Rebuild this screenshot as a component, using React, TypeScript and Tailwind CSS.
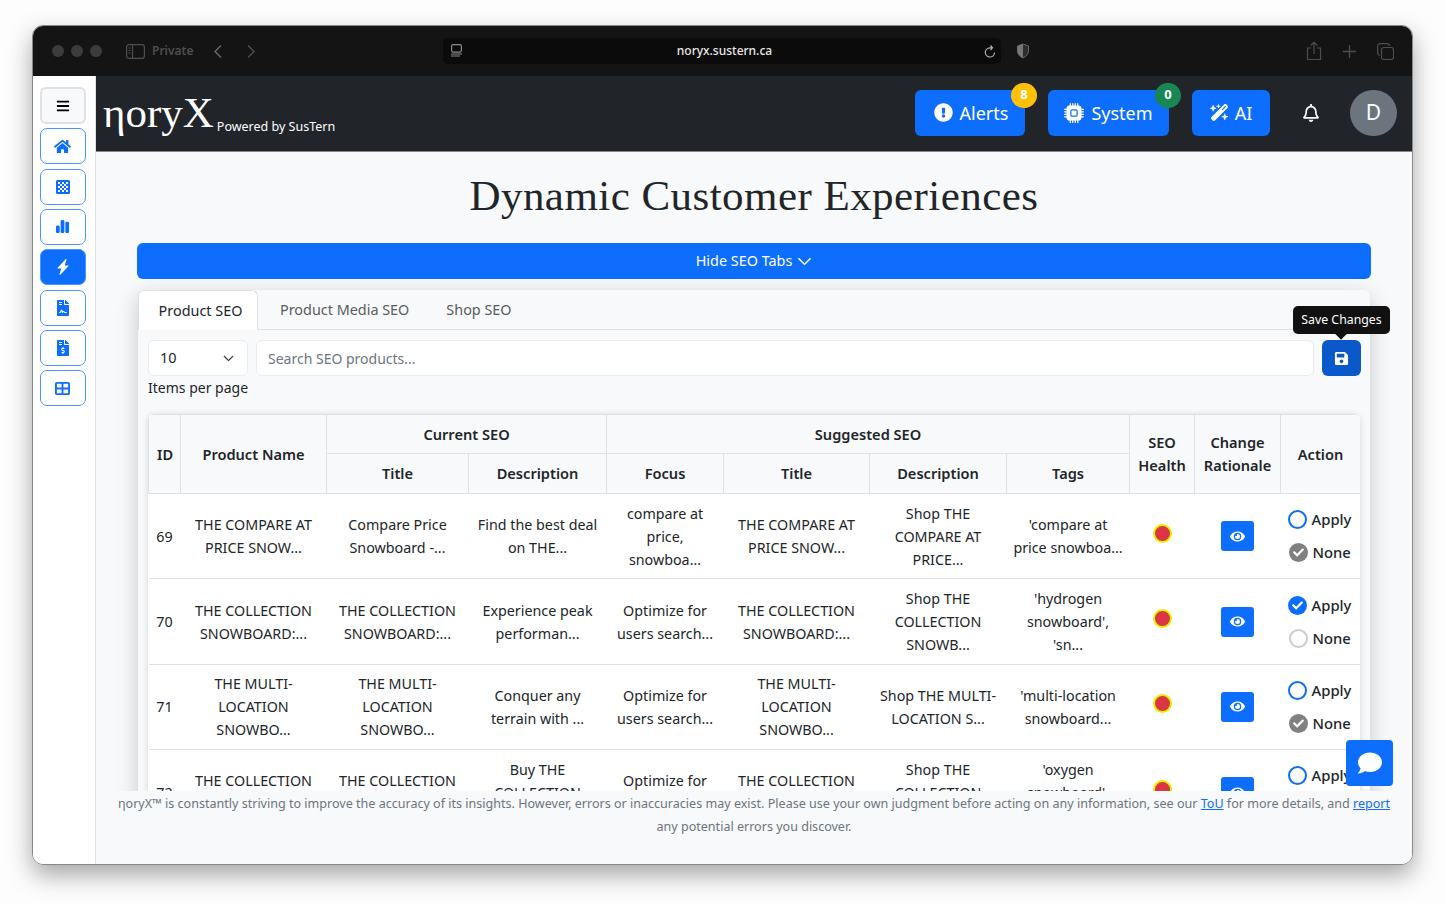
import { BsChevronDown, BsCpuFill, BsLightningChargeFill } from "react-icons/bs";
import {
  FaBars,
  FaCheck,
  FaComment,
  FaExclamationCircle,
  FaEye,
  FaFileContract,
  FaFileInvoiceDollar,
  FaHome,
  FaRegBell,
  FaSave,
} from "react-icons/fa";
import { FaChartSimple, FaTableCellsLarge, FaWandMagicSparkles } from "react-icons/fa6";

const sans = "font-['Noto_Sans',sans-serif]";

const rows = [
  { id: 69, name: "THE COMPARE AT PRICE SNOW...", title: "Compare Price Snowboard -...", desc: "Find the best deal on THE...", focus: "compare at price, snowboa...", sTitle: "THE COMPARE AT PRICE SNOW...", sDesc: "Shop THE COMPARE AT PRICE...", tags: "'compare at\nprice snowboa...", apply: false },
  { id: 70, name: "THE COLLECTION SNOWBOARD:...", title: "THE COLLECTION SNOWBOARD:...", desc: "Experience peak performan...", focus: "Optimize for users search...", sTitle: "THE COLLECTION SNOWBOARD:...", sDesc: "Shop THE COLLECTION SNOWB...", tags: "'hydrogen\nsnowboard',\n'sn...", apply: true },
  { id: 71, name: "THE MULTI-LOCATION SNOWBO...", title: "THE MULTI-LOCATION SNOWBO...", desc: "Conquer any terrain with ...", focus: "Optimize for users search...", sTitle: "THE MULTI-LOCATION SNOWBO...", sDesc: "Shop THE MULTI-LOCATION S...", tags: "'multi-location\nsnowboard...", apply: false },
  { id: 72, name: "THE COLLECTION SNOWBOARD:...", title: "THE COLLECTION SNOWBOARD:...", desc: "Buy THE COLLECTION SNOWBO...", focus: "Optimize for users search...", sTitle: "THE COLLECTION SNOWBOARD:...", sDesc: "Shop THE COLLECTION SNOWB...", tags: "'oxygen\nsnowboard',\n'sn...", apply: false },
];

function ChessIcon() {
  return (
    <svg width="14" height="14" viewBox="0 0 14 14" fill="currentColor">
      <rect width="14" height="14" rx="1.5" />
      {[2, 6, 10].flatMap((x) =>
        [2, 6, 10].map((y) => <rect key={`${x}-${y}`} x={x} y={y} width="2" height="2" fill="#fff" />)
      )}
      {[4, 8].flatMap((x) =>
        [4, 8].map((y) => <rect key={`b${x}-${y}`} x={x} y={y} width="2" height="2" fill="#fff" />)
      )}
    </svg>
  );
}

const sideIcons = [
  { name: "home", icon: <FaHome size={17} /> },
  { name: "grid", icon: <ChessIcon /> },
  { name: "chart", icon: <FaChartSimple size={15} /> },
  { name: "bolt", icon: <BsLightningChargeFill size={16} /> },
  { name: "sign", icon: <FaFileContract size={16} /> },
  { name: "bill", icon: <FaFileInvoiceDollar size={16} /> },
  { name: "table", icon: <FaTableCellsLarge size={15} /> },
];

function RadioDot({ state }: { state: "on" | "done" | "off" | "empty" }) {
  if (state === "on")
    return <span className="w-[19px] h-[19px] rounded-full bg-[#0d6efd] text-white flex items-center justify-center"><FaCheck size={11} /></span>;
  if (state === "done")
    return <span className="w-[19px] h-[19px] rounded-full bg-[#808080] text-white flex items-center justify-center"><FaCheck size={11} /></span>;
  if (state === "off") return <span className="w-[19px] h-[19px] rounded-full border-2 border-[#0d6efd] bg-white" />;
  return <span className="w-[19px] h-[19px] rounded-full border-2 border-[#ccc] bg-white" />;
}

const th = "border border-[#dee2e6] font-semibold text-[14.6px] text-center align-middle px-2 py-0";
const td = "border-b border-[#dee2e6] text-center align-middle px-2 py-0";

export default function App() {
  return (
    <div className={`${sans} w-[1445px] h-[904px] bg-[#fdfdfd] overflow-hidden pt-[25px] pl-[32px]`}>
      <div className="relative w-[1381px] h-[840px] rounded-[11px] overflow-hidden flex flex-col border border-[#888] shadow-[0_10px_24px_rgba(0,0,0,0.35)]">
        {/* safari toolbar */}
        <div className="h-[50px] shrink-0 bg-[#141414] flex items-center text-[#4e4e4e]">
          <div className="flex gap-[7px] pl-[19px]">
            <span className="w-[12px] h-[12px] rounded-full bg-[#3c3c3c]" />
            <span className="w-[12px] h-[12px] rounded-full bg-[#3c3c3c]" />
            <span className="w-[12px] h-[12px] rounded-full bg-[#3c3c3c]" />
          </div>
          <svg className="ml-[24px]" width="19" height="15" viewBox="0 0 19 15" fill="none" stroke="currentColor" strokeWidth="1.2">
            <rect x="0.6" y="0.6" width="17.8" height="13.8" rx="2.5" />
            <path d="M6.5 1v13M2.5 4h2M2.5 6.5h2M2.5 9h2" />
          </svg>
          <span className="ml-[7px] text-[12px] font-semibold">Private</span>
          <svg className="ml-[20px]" width="10" height="15" viewBox="0 0 10 15" fill="none" stroke="#6a6a6a" strokeWidth="1.4"><path d="M8 1.5 2 7.500l6 6" /></svg>
          <svg className="ml-[23px]" width="10" height="15" viewBox="0 0 10 15" fill="none" stroke="currentColor" strokeWidth="1.4"><path d="m2 1.500 6 6-6 6" /></svg>
          <div className="ml-[187px] w-[558px] h-[26px] rounded-[5px] bg-[#0b0b0b] flex items-center px-[7px] text-[#8a8a8a]">
            <svg width="13" height="14" viewBox="0 0 13 14" fill="none" stroke="currentColor" strokeWidth="1.2">
              <rect x="1.6" y="0.6" width="9.8" height="7.5" rx="1.5" /><path d="M1 10h11M1 12h9" />
            </svg>
            <span className="flex-1 text-center text-[12px] font-medium text-[#e8e8e8] pl-[2px]">noryx.sustern.ca</span>
            <svg className="mr-[-3px]" width="14" height="15" viewBox="0 0 14 15" fill="none" stroke="#b0b0b0" strokeWidth="1.2">
              <path d="M11.500 8.500a4.600 4.600 0 1 1-4.600-4.700h2M7.500 1.500l2 2.300-2 2.200" />
            </svg>
          </div>
          <svg className="ml-[15px]" width="14" height="16" viewBox="0 0 14 16"><path d="M7 1 1.500 3v5c0 3.500 3 5.800 5.500 7 2.500-1.200 5.500-3.500 5.500-7V3z" fill="#2d2d2d" stroke="#666" /><path d="M7 1 1.500 3v5c0 3.500 3 5.800 5.500 7z" fill="#777" /></svg>
          <div className="ml-auto flex items-center gap-[20px] pr-[18px]">
            <svg width="16" height="20" viewBox="0 0 16 20" fill="none" stroke="currentColor" strokeWidth="1.2"><path d="M5 7H1.500v11.500h13V7H11M8 13V1.500M4.800 4.500 8 1.300l3.200 3.200" /></svg>
            <svg width="15" height="15" viewBox="0 0 15 15" fill="none" stroke="currentColor" strokeWidth="1.300"><path d="M7.500 1v13M1 7.500h13" /></svg>
            <svg width="17" height="17" viewBox="0 0 17 17" fill="none" stroke="currentColor" strokeWidth="1.200"><rect x="4.500" y="4.500" width="12" height="12" rx="2.500" /><path d="M12.500 2.800C12.300 1.500 11.500.7 10 .7H3C1.600.7.700 1.600.700 3v7c0 1.500.8 2.300 2 2.500" /></svg>
          </div>
        </div>

        <div className="flex-1 flex min-h-0">
          {/* sidebar */}
          <div className="w-[63px] shrink-0 bg-white border-r border-[#dee2e6] flex flex-col items-center pt-[11px] pr-[3px] gap-[4.33px]">
            <div className="w-[46px] h-[37px] rounded-[6px] bg-[#f8f9fa] border-2 border-[#dee2e6] flex items-center justify-center text-black">
              <FaBars size={14} />
            </div>
            {sideIcons.map((s) => (
              <div
                key={s.name}
                className={`w-[46px] h-[36px] shrink-0 rounded-[7px] border border-[#4d94ff] flex items-center justify-center ${
                  s.name === "bolt" ? "bg-[#0d6efd] text-white" : "bg-white text-[#0d6efd]"
                }`}
              >
                {s.icon}
              </div>
            ))}
          </div>

          <div className="flex-1 min-w-0 flex flex-col bg-[#f8f9fa]">
            {/* header */}
            <div className="h-[76px] shrink-0 bg-[#212529] flex items-center text-white border-b border-[#888] pb-[2px]">
              <div className="pl-[7px] flex items-end">
                <span className="font-['Liberation_Serif',serif] text-[43px] leading-[44px]">ηoryX</span>
                <span className="ml-[3px] mb-[-1px] text-[12.5px] leading-[18px]">Powered by SusTern</span>
              </div>
              <div className="ml-auto flex items-center pr-[15px]">
                <div className="relative h-[46px] w-[110px] rounded-[6px] bg-[#0d6efd] flex items-center justify-center gap-[7px] text-[18px] pl-[2px]">
                  <FaExclamationCircle size={19} />
                  <span className="pt-[1px]">Alerts</span>
                  <span className="absolute -top-[7px] -right-[12px] w-[26px] h-[25px] rounded-full bg-[#ffc107] flex items-center justify-center text-[13px] font-bold">8</span>
                </div>
                <div className="relative ml-[23px] h-[46px] w-[121px] rounded-[6px] bg-[#0d6efd] flex items-center justify-center gap-[7px] text-[18px]">
                  <BsCpuFill size={20} />
                  <span className="pt-[1px]">System</span>
                  <span className="absolute -top-[7px] -right-[12px] w-[26px] h-[25px] rounded-full bg-[#198754] flex items-center justify-center text-[13px] font-bold">0</span>
                </div>
                <div className="ml-[23px] h-[46px] w-[78px] rounded-[6px] bg-[#0d6efd] flex items-center justify-center gap-[6px] text-[18px]">
                  <FaWandMagicSparkles size={19} />
                  <span className="pt-[1px]">AI</span>
                </div>
                <FaRegBell className="ml-[32px]" size={18} />
                <div className="ml-[30px] w-[47px] h-[46px] rounded-full bg-[#6c757d] flex items-center justify-center text-[21px]">D</div>
              </div>
            </div>

            {/* scrolling content */}
            <div className="relative h-[639px] shrink-0 overflow-hidden px-[41px]">
              <h1 className="font-['Liberation_Serif',serif] text-[43px] tracking-[0.45px] leading-[48px] text-center text-[#212529] pt-[20px] h-[91px]">
                Dynamic Customer Experiences
              </h1>
              <div className="h-[36px] rounded-[6px] bg-[#0d6efd] text-white text-[14.4px] flex items-center justify-center gap-[5px]">
                Hide SEO Tabs <BsChevronDown size={15} strokeWidth={0.7} />
              </div>
              <div className="mt-[11px] mx-[1px] rounded-[6px] bg-[#f8f9fa] shadow-[0_6px_22px_rgba(0,0,0,0.2)] h-[600px]">
                <div className="flex h-[40px] border-b border-[#dee2e6] text-[14.4px] text-[#595c5f]">
                  <div className="w-[120px] h-[40px] bg-white text-[#212529] border border-b-0 border-[#dee2e6] rounded-t-[6px] flex items-center justify-center pl-[5px]">Product SEO</div>
                  <div className="ml-[22px] flex items-center">Product Media SEO</div>
                  <div className="ml-[37px] flex items-center">Shop SEO</div>
                </div>
                <div className="pl-[10px] pr-[9px] pt-[10px]">
                  <div className="flex gap-[8px]">
                    <div className="w-[100px] h-[36px] bg-white border border-[#e9ecef] rounded-[6px] flex items-center justify-between pl-[11px] pr-[13px] text-[14.4px] text-[#212529]">
                      10 <BsChevronDown size={11} strokeWidth={0.8} />
                    </div>
                    <div className="flex-1 h-[36px] bg-white border border-[#e9ecef] rounded-[6px] flex items-center px-[11px] text-[14px] text-[#6c757d]">Search SEO products...</div>
                    <div className="w-[39px] h-[36px] rounded-[6px] bg-[#0a58ca] text-white flex items-center justify-center">
                      <FaSave size={15} />
                    </div>
                  </div>
                  <div className="text-[14px] leading-[21px] mt-[1px] text-[#212529]">Items per page</div>
                  <div className="mt-[16px] rounded-[6px] overflow-hidden shadow-[0_1px_6px_rgba(0,0,0,0.15)] w-[1212px]">
                    <table className="table-fixed border-collapse w-[1212px] text-[14.3px] leading-[23px] text-[#212529] bg-white">
                      <colgroup>
                        <col className="w-[32px]" /><col className="w-[146px]" /><col className="w-[142px]" /><col className="w-[138px]" />
                        <col className="w-[117px]" /><col className="w-[146px]" /><col className="w-[137px]" /><col className="w-[123px]" />
                        <col className="w-[65px]" /><col className="w-[86px]" /><col className="w-[80px]" />
                      </colgroup>
                      <thead className="bg-[#f8f9fa]">
                        <tr className="h-[39px]">
                          <th rowSpan={2} className={th}>ID</th>
                          <th rowSpan={2} className={th}>Product Name</th>
                          <th colSpan={2} className={th}>Current SEO</th>
                          <th colSpan={4} className={th}>Suggested SEO</th>
                          <th rowSpan={2} className={th}>SEO Health</th>
                          <th rowSpan={2} className={th}>Change Rationale</th>
                          <th rowSpan={2} className={th}>Action</th>
                        </tr>
                        <tr className="h-[40px]">
                          {["Title", "Description", "Focus", "Title", "Description", "Tags"].map((h, i) => (
                            <th key={i} className={th}>{h}</th>
                          ))}
                        </tr>
                      </thead>
                      <tbody>
                        {rows.map((r) => (
                          <tr key={r.id} className="h-[85.4px]">
                            <td className={`${td} !px-0`}>{r.id}</td>
                            <td className={td}>{r.name}</td>
                            <td className={td}>{r.title}</td>
                            <td className={td}>{r.desc}</td>
                            <td className={td}>{r.focus}</td>
                            <td className={td}>{r.sTitle}</td>
                            <td className={td}>{r.sDesc}</td>
                            <td className={`${td} !px-[2px] whitespace-pre-line`}>{r.tags}</td>
                            <td className={td}>
                              <span className="block mx-auto mb-[6px] w-[19px] h-[19px] rounded-full bg-[#dc3545] border-2 border-[#e3f000]" />
                            </td>
                            <td className={td}>
                              <span className="inline-flex w-[33px] h-[30px] rounded-[3px] bg-[#0d6efd] text-white items-center justify-center align-middle">
                                <FaEye size={15} />
                              </span>
                            </td>
                            <td className={`${td} !px-0 font-medium text-[14.8px]`}>
                              <div className="flex flex-col items-start pl-[7px] gap-[10px]">
                                <div className="flex items-center gap-[5px]"><RadioDot state={r.apply ? "on" : "off"} />Apply</div>
                                <div className="flex items-center gap-[5px] pl-[1px]"><RadioDot state={r.apply ? "empty" : "done"} />None</div>
                              </div>
                            </td>
                          </tr>
                        ))}
                      </tbody>
                    </table>
                  </div>
                </div>
              </div>
            </div>

            {/* footer note */}
            <div className="flex-1 px-[20px] pt-[1px] text-center text-[12.55px] leading-[23px] text-[#6c757d]">
              ηoryX™ is constantly striving to improve the accuracy of its insights. However, errors or inaccuracies may exist. Please use your own judgment before acting on any information, see our{" "}
              <span className="text-[#0d6efd] underline">ToU</span> for more details, and <span className="text-[#0d6efd] underline">report</span> any potential errors you discover.
            </div>
          </div>
        </div>

        {/* tooltip over the save button */}
        <div className="absolute left-[1260px] top-[280px] h-[28px] w-[97px] rounded-[5px] bg-[#111] text-white text-[12.3px] flex items-center justify-center">
          Save Changes
          <span className="absolute -bottom-[4px] left-[44px] w-[8px] h-[8px] rotate-45 bg-[#111]" />
        </div>
        {/* chat */}
        <div className="absolute left-[1313px] top-[714px] w-[47px] h-[46px] rounded-[4px] bg-[#0d6efd] text-white flex items-center justify-center">
          <FaComment size={24} />
        </div>
      </div>
    </div>
  );
}
